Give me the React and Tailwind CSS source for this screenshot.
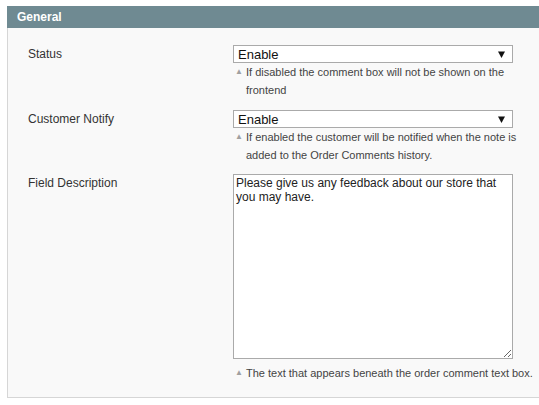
const Arrow = () => (
  <svg width="7" height="7" viewBox="0 0 7 7" className="shrink-0">
    <path d="M0 0.5 H7 L3.5 7 Z" fill="#111" />
  </svg>
);

const Hint = ({ children }) => (
  <div className="flex w-[300px] text-[11px] leading-[18px] text-[#444]">
    <span className="w-[13px] shrink-0 pl-[2px] text-[8px] text-[#a0a0a0]">▲</span>
    <span>{children}</span>
  </div>
);

const Select = ({ value }) => (
  <div className="flex h-[18px] w-[280px] items-center justify-between border border-[#aaa] bg-white pl-[4px] pr-[7px] text-[13px] leading-none text-[#111]">
    <span>{value}</span>
    <Arrow />
  </div>
);

const Row = ({ label, className, children }) => (
  <div className={`flex ${className || ''}`}>
    <div className="w-[225px] shrink-0 pl-[20px] pt-[1px] text-[12px] leading-[16px] text-[#333]">{label}</div>
    <div className="flex flex-col">{children}</div>
  </div>
);

export default function App() {
  return (
    <div className="min-h-screen bg-white pl-[7px] pt-[6px]" style={{ fontFamily: '"Liberation Sans", Arial, sans-serif' }}>
      <div className="flex h-[22px] items-center bg-[#6f8a92] pl-[10px] text-[12px] font-bold text-white">General</div>
      <div className="flex flex-col border-b border-l border-[#d6d6d6] bg-[#f9f9f9] pb-[15px] pt-[17px]">
        <Row label="Status">
          <Select value="Enable" />
          <Hint>If disabled the comment box will not be shown on the frontend</Hint>
        </Row>
        <Row label="Customer Notify" className="mt-[11px]">
          <Select value="Enable" />
          <Hint>If enabled the customer will be notified when the note is added to the Order Comments history.</Hint>
        </Row>
        <Row label="Field Description" className="mt-[10px]">
          <textarea
            className="mb-[5px] h-[185px] w-[280px] resize border border-[#aaa] bg-white px-[2px] py-[1px] text-[12px] leading-[14px] text-[#222] outline-none"
            defaultValue="Please give us any feedback about our store that you may have."
          />
          <Hint>The text that appears beneath the order comment text box.</Hint>
        </Row>
      </div>
    </div>
  );
}
